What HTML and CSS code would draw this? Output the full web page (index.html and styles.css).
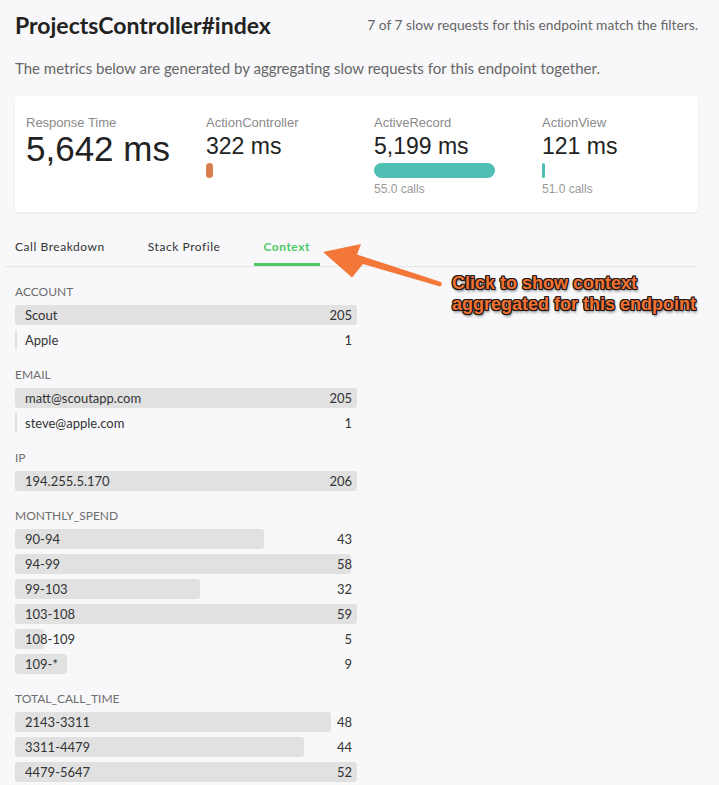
FILE: index.html
```html
<!DOCTYPE html>
<html>
<head>
<meta charset="utf-8">
<link rel="stylesheet" href="styles.css">
</head>
<body>
<div class="page">
  <header class="head">
    <h1 class="title">ProjectsController#index</h1>
    <div class="match">7 of 7 slow requests for this endpoint match the filters.</div>
  </header>
  <p class="intro">The metrics below are generated by aggregating slow requests for this endpoint together.</p>

  <section class="card">
    <div class="metric first">
      <div class="m-label">Response Time</div>
      <div class="m-big">5,642 ms</div>
    </div>
    <div class="metric">
      <div class="m-label">ActionController</div>
      <div class="m-val">322 ms</div>
      <div class="track"><div class="bar orange" style="width:5.7%"></div></div>
    </div>
    <div class="metric">
      <div class="m-label">ActiveRecord</div>
      <div class="m-val">5,199 ms</div>
      <div class="track"><div class="bar teal" style="width:92.2%"></div></div>
      <div class="m-calls">55.0 calls</div>
    </div>
    <div class="metric last">
      <div class="m-label">ActionView</div>
      <div class="m-val">121 ms</div>
      <div class="track"><div class="bar teal" style="width:2.3%"></div></div>
      <div class="m-calls">51.0 calls</div>
    </div>
  </section>

  <nav class="tabs">
    <a class="tab">Call Breakdown</a>
    <a class="tab">Stack Profile</a>
    <a class="tab active">Context</a>
  </nav>

  <div class="context">
    <div class="group">
      <div class="g-label">ACCOUNT</div>
      <div class="row"><div class="fill" style="width:100%"></div><span class="name">Scout</span><span class="count">205</span></div>
      <div class="row"><div class="fill" style="width:0.6%"></div><span class="name">Apple</span><span class="count">1</span></div>
    </div>
    <div class="group">
      <div class="g-label">EMAIL</div>
      <div class="row"><div class="fill" style="width:100%"></div><span class="name">matt@scoutapp.com</span><span class="count">205</span></div>
      <div class="row"><div class="fill" style="width:0.6%"></div><span class="name">steve@apple.com</span><span class="count">1</span></div>
    </div>
    <div class="group">
      <div class="g-label">IP</div>
      <div class="row"><div class="fill" style="width:100%"></div><span class="name">194.255.5.170</span><span class="count">206</span></div>
    </div>
    <div class="group">
      <div class="g-label">MONTHLY_SPEND</div>
      <div class="row"><div class="fill" style="width:72.9%"></div><span class="name">90-94</span><span class="count">43</span></div>
      <div class="row"><div class="fill" style="width:98.3%"></div><span class="name">94-99</span><span class="count">58</span></div>
      <div class="row"><div class="fill" style="width:54.2%"></div><span class="name">99-103</span><span class="count">32</span></div>
      <div class="row"><div class="fill" style="width:100%"></div><span class="name">103-108</span><span class="count">59</span></div>
      <div class="row"><div class="fill" style="width:8.5%"></div><span class="name">108-109</span><span class="count">5</span></div>
      <div class="row"><div class="fill" style="width:15.3%"></div><span class="name">109-*</span><span class="count">9</span></div>
    </div>
    <div class="group">
      <div class="g-label">TOTAL_CALL_TIME</div>
      <div class="row"><div class="fill" style="width:92.3%"></div><span class="name">2143-3311</span><span class="count">48</span></div>
      <div class="row"><div class="fill" style="width:84.6%"></div><span class="name">3311-4479</span><span class="count">44</span></div>
      <div class="row"><div class="fill" style="width:100%"></div><span class="name">4479-5647</span><span class="count">52</span></div>
    </div>
  </div>

  <svg class="arrow" width="719" height="785" viewBox="0 0 719 785">
    <path d="M323 252 L361 244 L357 254.5 L441 282 Q443 285 440 286.5 L363 264 L352 277.5 Z" fill="#f4773a"/>
  </svg>
  <div class="note">Click to show context<br>aggregated for this endpoint</div>
</div>
</body>
</html>
```

FILE: styles.css
```css
* { box-sizing: border-box; }
html, body { margin: 0; padding: 0; background: #f8f8fa; }
body { font-family: Lato, "Open Sans", sans-serif; color: #333; }

.page {
  position: relative;
  width: 719px;
  height: 785px;
  overflow: hidden;
  padding: 11px 21px 0 15px;
}

.head {
  display: flex;
  justify-content: space-between;
  align-items: center;
}
.title {
  margin: 0;
  font-size: 23px;
  line-height: 28px;
  font-weight: 700;
  color: #222;
  letter-spacing: 0;
}
.match {
  font-size: 13.8px;
  color: #666;
  line-height: 16px;
}
.intro {
  margin: 19px 0 18px;
  font-size: 15px;
  line-height: 20px;
  color: #666;
}

.card {
  display: flex;
  background: #fff;
  border-radius: 3px;
  box-shadow: 0 1px 2px rgba(0,0,0,0.08);
  padding: 20px 11px 16px;
  height: 116px;
}
.metric { width: 168px; flex-shrink: 0; font-family: "Liberation Sans", Arial, sans-serif; }
.metric.first { width: 180px; }
.metric.last { flex: 1; }
.m-label { font-size: 13px; line-height: 13px; color: #8a8a8a; }
.m-big { font-size: 35px; line-height: 39px; color: #222; }
.m-val { font-size: 23px; line-height: 23px; color: #222; margin-top: 6px; }
.track { width: 131px; height: 15px; margin-top: 5px; }
.bar { height: 15px; border-radius: 8px; min-width: 3px; }
.bar.orange { background: #d97f4f; border-radius: 4px; }
.bar.teal { background: #4fbfb4; }
.m-calls { font-size: 12px; line-height: 14px; color: #999; margin-top: 4px; }

.tabs {
  display: flex;
  margin: 27px 0 0 -10px;
  border-bottom: 1px solid #e6e6e8;
}
.tab {
  font-size: 12px;
  line-height: 16px;
  letter-spacing: 0.55px;
  color: #333;
  padding: 0 10px 8px;
  margin-right: 23px;
  border-bottom: 3px solid transparent;
}
.tab.active {
  color: #4fc866;
  font-weight: 700;
  letter-spacing: 0.5px;
  border-bottom-color: #4fc866;
}

.context { width: 342px; padding-top: 17px; }
.group { margin-bottom: 17px; }
.g-label {
  font-size: 12px;
  line-height: 16px;
  color: #6e6e6e;
  margin-bottom: 5px;
}
.row {
  position: relative;
  height: 20px;
  display: flex;
  justify-content: space-between;
  align-items: center;
  padding: 0 5px 0 10px;
  margin-bottom: 5px;
  font-size: 13px;
  color: #333;
}
.fill {
  position: absolute;
  left: 0; top: 0; bottom: 0;
  background: #e1e1e1;
  border-radius: 3px;
  min-width: 2px;
}
.name, .count { position: relative; }

.arrow { position: absolute; left: 0; top: 0; pointer-events: none; }
.note {
  position: absolute;
  left: 452px;
  top: 273px;
  font-family: "Liberation Sans", Arial, sans-serif;
  font-weight: 700;
  font-size: 18px;
  line-height: 21px;
  color: #f4702e;
  text-shadow: 1px 0 0 #1a1a1a, -1px 0 0 #1a1a1a, 0 1px 0 #1a1a1a, 0 -1px 0 #1a1a1a,
    1px 1px 0 #1a1a1a, -1px -1px 0 #1a1a1a, 1px -1px 0 #1a1a1a, -1px 1px 0 #1a1a1a,
    1px 2px 3px rgba(0,0,0,0.7);
  white-space: nowrap;
}
```
